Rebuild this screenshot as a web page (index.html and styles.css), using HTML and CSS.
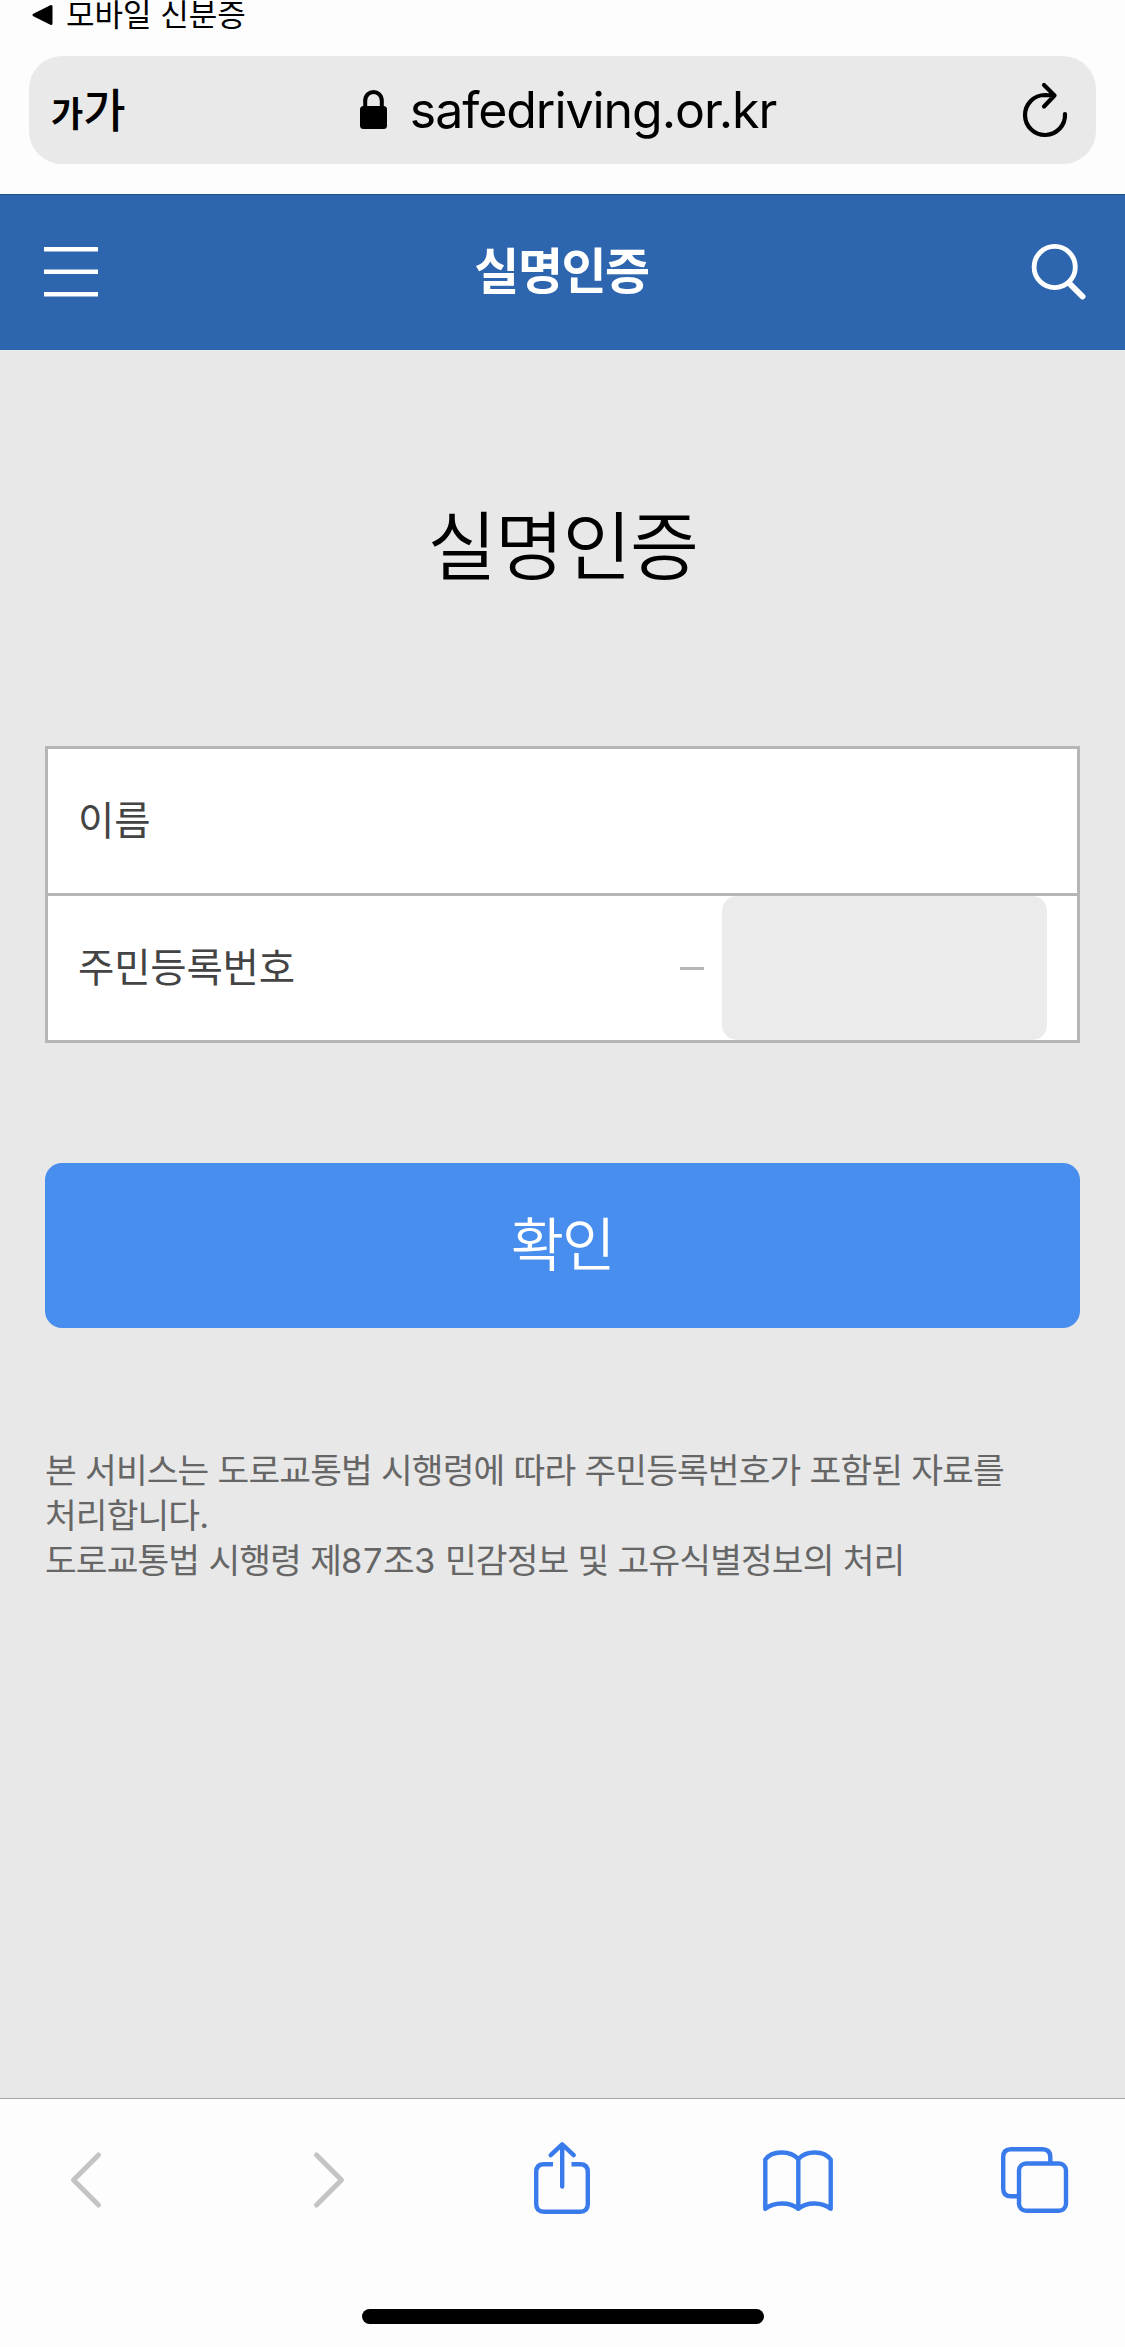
FILE: index.html
```html
<!DOCTYPE html>
<html lang="ko">
<head>
    <meta charset="UTF-8">
    <meta name="viewport" content="width=device-width, initial-scale=1.0">
    <title>실명인증</title>
    <link rel="stylesheet" href="styles.css">
</head>
<body>
    <div class="browser-top">
        <div class="back-app">
            <svg width="24" height="24" viewBox="0 0 24 24"><path d="M3 12 L20 3.5 V20.500 Z" fill="#000" stroke="#000" stroke-width="3" stroke-linejoin="round"/></svg>
            <span>모바일 신분증</span>
        </div>
        <div class="address-bar">
            <div class="text-size"><span class="small">가</span><span class="large">가</span></div>
            <div class="address">
                <svg width="27" height="40" viewBox="0 0 27 40">
                    <path d="M5.200 18 V11 C5.200 -1 21.800 -1 21.800 11 V18" fill="none" stroke="#000" stroke-width="4"/>
                    <rect x="0" y="16" width="27" height="23" rx="3.500"/>
                </svg>
                <span>safedriving.or.kr</span>
            </div>
            <svg class="reload" width="50" height="60" viewBox="0 0 50 60" fill="none" stroke="#000" stroke-width="4.200" stroke-linecap="round" stroke-linejoin="round">
                <path d="M45 34 A20 20 0 1 1 25 15 L34.500 15.500 M24 5 L34.500 15.500 L24 26.500"/>
            </svg>
        </div>
    </div>

    <header class="header">
        <svg width="54" height="50" viewBox="0 0 54 50" fill="#fff">
            <rect y="0" width="54" height="4.500"/>
            <rect y="22.500" width="54" height="4.500"/>
            <rect y="45" width="54" height="4.500"/>
        </svg>
        <h1>실명인증</h1>
        <svg width="56" height="58" viewBox="0 0 56 58" fill="none" stroke="#fff" stroke-linecap="round">
            <circle cx="24.700" cy="24" r="20.600" stroke-width="4.800"/>
            <path d="M39.500 40.500 L52.500 53.500" stroke-width="6"/>
        </svg>
    </header>

    <main class="content">
        <h2>실명인증</h2>
        <form>
            <div class="form-box">
                <div class="form-row">
                    <label for="name">이름</label>
                    <input type="text" id="name">
                </div>
                <div class="form-row">
                    <label for="jumin1">주민등록번호</label>
                    <input type="text" id="jumin1">
                    <span class="dash"></span>
                    <input type="password" id="jumin2" class="jumin-back">
                </div>
            </div>
            <button type="button" class="btn-confirm">확인</button>
        </form>
        <p class="notice">본 서비스는 도로교통법 시행령에 따라 주민등록번호가 포함된 자료를<br>처리합니다.<br>도로교통법 시행령 제<span class="num">87</span>조<span class="num">3</span> 민감정보 및 고유식별정보의 처리</p>
    </main>

    <nav class="toolbar">
        <div class="toolbar-icons">
            <svg class="disabled" viewBox="0 0 80 80"><path d="M51.500 15 L26.500 40 L51.500 65"/></svg>
            <svg class="disabled" viewBox="0 0 80 80"><path d="M32.500 15 L57.500 40 L32.500 65"/></svg>
            <svg viewBox="0 0 80 80">
                <path stroke-linecap="butt" d="M32 24.300 H23 Q15.200 24.300 15.200 32 V64 Q15.200 71.700 23 71.700 H59 Q66.800 71.700 66.800 64 V32 Q66.800 24.300 59 24.300 H50.500"/>
                <path d="M41.200 46.500 V4.500 M29.700 15.200 L41.200 4.300 L52.700 15.200"/>
            </svg>
            <svg viewBox="0 0 80 80">
                <path d="M7.300 19.500 C14 10.500 32 10 40.300 19 C48.600 10 66 10.500 72.700 19.500 V68.800 C64 62 49 61.500 40.300 68.800 C31.600 61.500 16 62 7.300 68.800 Z M40.300 19 V68.800"/>
            </svg>
            <svg viewBox="0 0 80 80">
                <path stroke-linecap="butt" d="M24 56.300 H16 Q8.200 56.300 8.200 48.500 V17 Q8.200 9.200 16 9.200 H47.500 Q55.300 9.200 55.300 17 V23"/>
                <rect x="24" y="23.500" width="47" height="47.300" rx="7"/>
            </svg>
        </div>
        <div class="home-indicator"></div>
    </nav>
</body>
</html>
```
FILE: styles.css
```css
* {
    box-sizing: border-box;
}
body {
    margin: 0;
    height: 2347px;
    display: flex;
    flex-direction: column;
    overflow: hidden;
    font-family: Inter, 'Noto Sans CJK KR', sans-serif;
    color: #000;
    background-color: #e8e8e8;
}
svg {
    display: block;
    flex: none;
}
h1, h2, p {
    margin: 0;
}

/* browser top */
.browser-top {
    height: 194px;
    padding: 0 29px;
    background-color: #fdfdfd;
}
.back-app {
    display: flex;
    align-items: center;
    gap: 11px;
    height: 56px;
    padding: 1px 0 27px 2px;
    font-size: 31px;
    line-height: 28px;
    white-space: nowrap;
}
.address-bar {
    display: grid;
    grid-template-columns: 1fr auto 1fr;
    align-items: center;
    height: 108px;
    padding: 0 26px 0 22px;
    border-radius: 33px;
    background-color: #e9e9e9;
}
.text-size {
    display: flex;
    align-items: baseline;
    padding-top: 3px;
    font-weight: 500;
    line-height: 60px;
}
.text-size .small {
    font-size: 35px;
    font-weight: 700;
}
.text-size .large {
    font-size: 46px;
}
.address {
    display: flex;
    align-items: center;
    gap: 23px;
    padding-left: 15px;
    font-size: 50px;
    line-height: 60px;
    letter-spacing: -1.05px;
}
.reload {
    justify-self: end;
}

/* header */
.header {
    display: flex;
    align-items: center;
    justify-content: space-between;
    height: 156px;
    padding: 0 39px 2px 44px;
    border-top: 1px solid #244f88;
    background-color: #2d65ae;
    color: #fff;
}
.header h1 {
    padding: 1px 5px 0 0;
    font-size: 49px;
    font-weight: 700;
    line-height: 70px;
    letter-spacing: -1.5px;
}

/* content */
.content {
    flex: 1;
    padding: 147px 45px 0;
}
.content h2 {
    font-size: 75px;
    font-weight: 350;
    line-height: 100px;
    letter-spacing: -1.5px;
    text-align: center;
}
.form-box {
    margin-top: 149px;
    border: 3px solid #b6b6b6;
    background-color: #fff;
}
.form-row {
    display: flex;
    align-items: center;
    height: 144px;
    padding: 0 30px;
}
.form-row + .form-row {
    height: 147px;
    border-top: 3px solid #b6b6b6;
}
.form-row label {
    padding-bottom: 7px;
    font-size: 39.5px;
    letter-spacing: -0.2px;
    color: #444;
}
.form-row input {
    flex: 1;
    min-width: 0;
    height: 100%;
    padding: 0 20px;
    border: none;
    background: none;
    font: inherit;
    font-size: 40px;
}
.dash {
    width: 24px;
    height: 3px;
    margin-right: 18px;
    background-color: #b6b6b6;
}
.form-row .jumin-back {
    flex: none;
    width: 325px;
    border-radius: 15px;
    background-color: #ebebeb;
}
.btn-confirm {
    display: block;
    width: 100%;
    height: 165px;
    margin-top: 120px;
    padding: 0 1px 9px 0;
    border: none;
    border-radius: 17px;
    background-color: #488eef;
    color: #fff;
    font-family: inherit;
    font-size: 58px;
    font-weight: 350;
    letter-spacing: -2px;
}
.notice {
    margin-top: 120px;
    font-size: 34.5px;
    line-height: 45px;
    letter-spacing: -0.9px;
    word-spacing: 0.4px;
    white-space: nowrap;
    color: #666;
}
.notice .num {
    letter-spacing: 0.6px;
}

/* bottom toolbar */
.toolbar {
    height: 249px;
    padding-top: 41px;
    border-top: 1px solid #a5a5a5;
    background-color: #fdfdfd;
}
.toolbar-icons {
    display: flex;
    justify-content: space-between;
    padding: 0 50px 0 47px;
}
.toolbar-icons svg {
    width: 80px;
    height: 80px;
    fill: none;
    stroke: #3a7bec;
    stroke-width: 4.4;
    stroke-linecap: round;
    stroke-linejoin: round;
}
.toolbar-icons .disabled {
    stroke: #c4c4c4;
    stroke-width: 5;
}
.home-indicator {
    width: 402px;
    height: 15px;
    margin: 89px auto 0;
    border-radius: 8px;
    background-color: #000;
}
```
